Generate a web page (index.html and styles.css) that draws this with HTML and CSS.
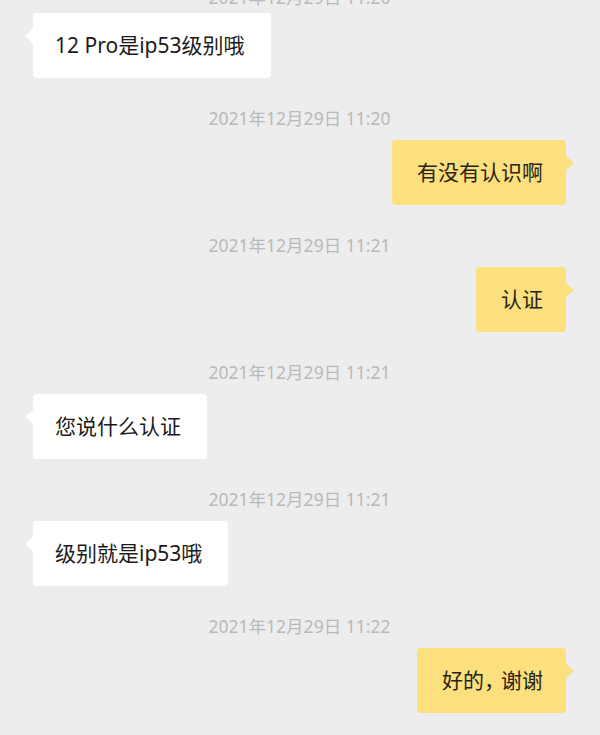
FILE: index.html
```html
<!DOCTYPE html>
<html lang="zh-CN">
<head>
<meta charset="utf-8">
<title>Chat</title>
<link rel="stylesheet" href="styles.css">
</head>
<body>
<div class="chat">
  <div class="time">2021年12月29日 11:20</div>
  <div class="row left"><div class="bubble white">12 Pro是ip53级别哦</div></div>

  <div class="time">2021年12月29日 11:20</div>
  <div class="row right"><div class="bubble yellow">有没有认识啊</div></div>

  <div class="time">2021年12月29日 11:21</div>
  <div class="row right"><div class="bubble yellow">认证</div></div>

  <div class="time">2021年12月29日 11:21</div>
  <div class="row left"><div class="bubble white">您说什么认证</div></div>

  <div class="time">2021年12月29日 11:21</div>
  <div class="row left"><div class="bubble white">级别就是ip53哦</div></div>

  <div class="time">2021年12月29日 11:22</div>
  <div class="row right"><div class="bubble yellow">好的<span class="comma">，</span>谢谢</div></div>
</div>
</body>
</html>
```
FILE: styles.css
```css
html, body {
  margin: 0;
  padding: 0;
  background: #ededed;
  height: 735px;
  overflow: hidden;
}

.chat {
  margin-top: -13px;
  padding: 0 34px 0 33px;
  font-family: "Noto Sans", "Noto Sans CJK SC", sans-serif;
  display: flex;
  flex-direction: column;
}

.time {
  text-align: center;
  font-size: 17.5px;
  line-height: 20px;
  color: #b9b9b9;
  margin: 30px 0 12px;
}

.time:first-child {
  margin-top: 0;
  margin-bottom: 6px;
}

.row {
  display: flex;
}

.row.left {
  justify-content: flex-start;
}

.row.right {
  justify-content: flex-end;
}

.bubble {
  position: relative;
  font-size: 21px;
  line-height: 29px;
  border-radius: 4px;
  color: #1b1b1b;
}

.bubble.white {
  background: #ffffff;
  padding: 18px 26px 18px 22px;
}

.bubble.yellow {
  background: #fde07e;
  color: #2a2418;
  padding: 18px 23px 18px 25px;
}

.comma {
  letter-spacing: -4px;
}

.bubble::after {
  content: "";
  position: absolute;
  top: 16px;
  width: 0;
  height: 0;
  border-top: 7px solid transparent;
  border-bottom: 7px solid transparent;
}

.bubble.white::after {
  left: -8px;
  border-right: 8px solid #ffffff;
}

.bubble.yellow::after {
  right: -8px;
  border-left: 8px solid #fde07e;
}
```
